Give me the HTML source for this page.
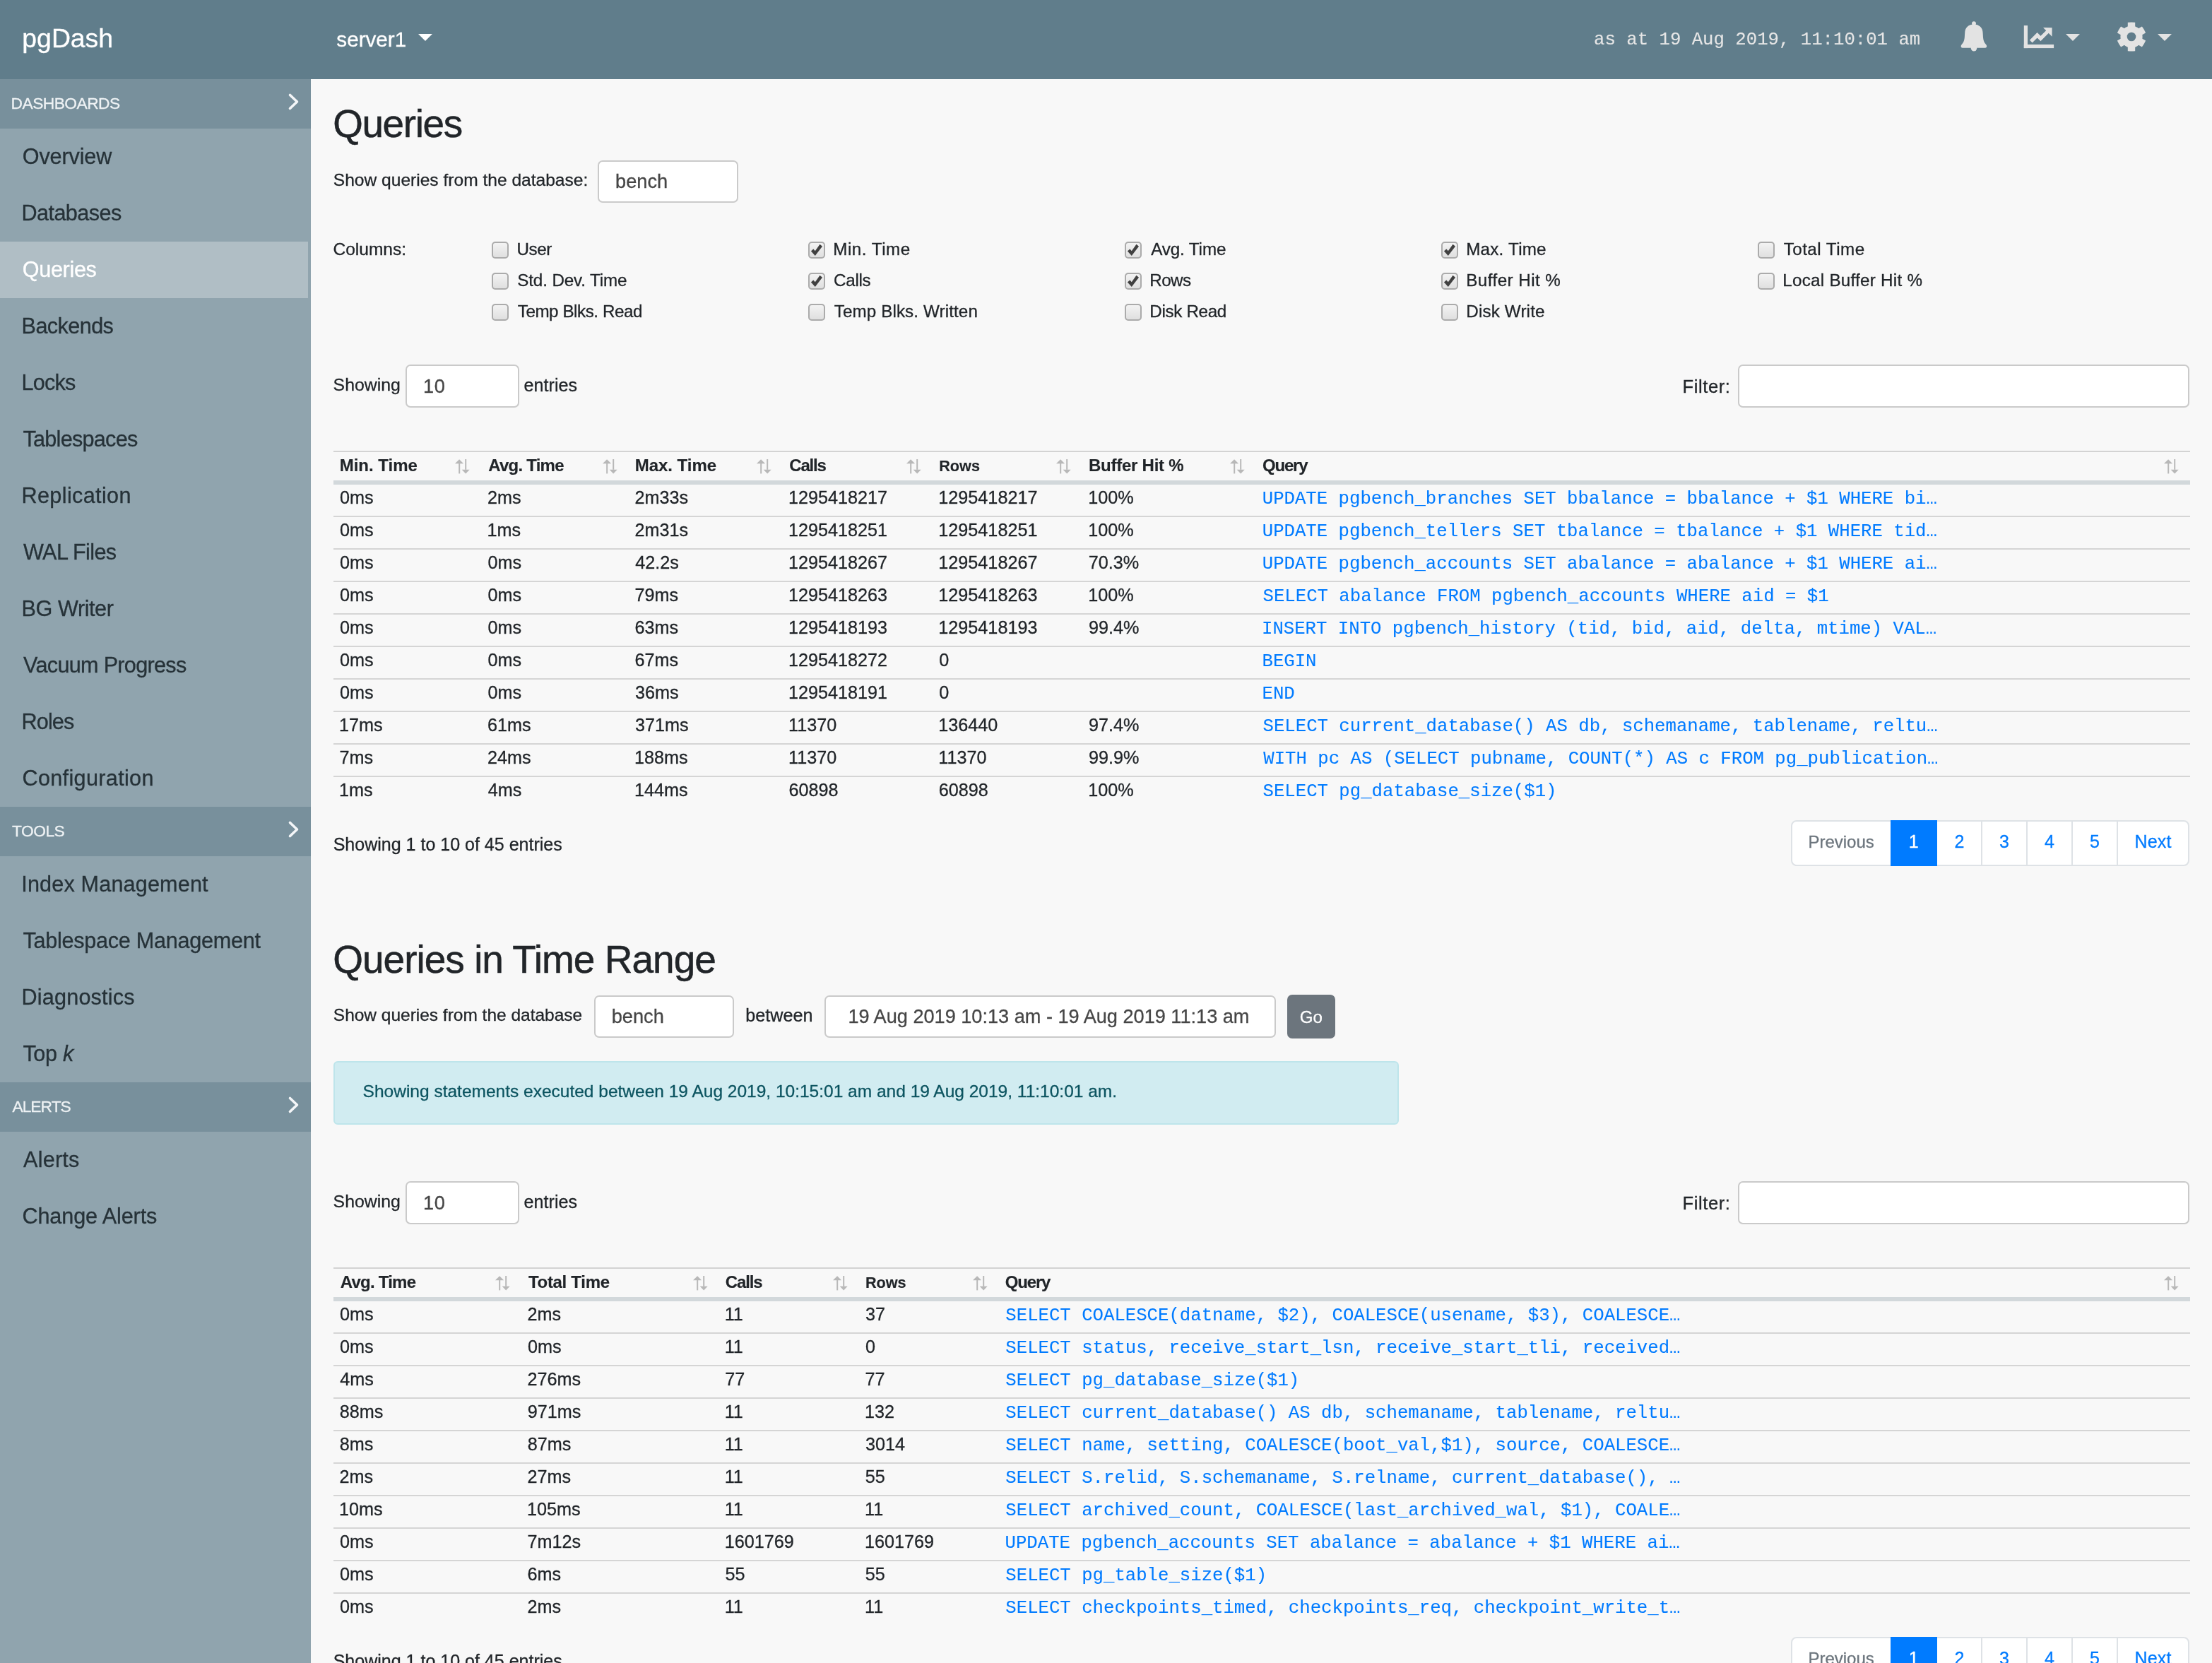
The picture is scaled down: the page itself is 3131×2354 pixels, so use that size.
<!DOCTYPE html>
<html><head><meta charset="utf-8"><title>pgDash - Queries</title>
<style>
html,body{margin:0;padding:0;}
body{width:3131px;height:2354px;overflow:hidden;position:relative;background:#f8f8f8;font-family:"Liberation Sans",sans-serif;}
body>div,body>svg{position:absolute;}
.t{position:absolute;white-space:pre;line-height:1;-webkit-text-stroke-width:0.3px;}
#tx{position:absolute;left:0;top:0;width:3131px;height:2354px;will-change:transform;}
</style></head><body>
<div style="left:0px;top:0px;width:3131px;height:112px;background:#607d8b"></div>
<svg style="left:592px;top:48px" width="20" height="10"><polygon points="0,0 20,0 10,10" fill="#ffffff"/></svg>
<svg style="left:2770px;top:25px" width="50" height="52" viewBox="0 0 50 52">
<circle cx="24" cy="8.2" r="2.9" fill="#e3e3e3"/>
<path d="M11.2 21.5 C11.2 14 16.5 9.4 23.9 9.4 C31.3 9.4 36.6 14 36.6 21.5 L37 28 C37.5 34 39.8 36.5 41.5 38.5 C42.6 39.8 42.5 42.7 40 42.7 L7.8 42.7 C5.3 42.7 5.2 39.8 6.3 38.5 C8 36.5 10.3 34 10.8 28 Z" fill="#e3e3e3"/>
<circle cx="24" cy="43.2" r="4.2" fill="#e3e3e3"/>
</svg>
<svg style="left:2860px;top:30px" width="52" height="42" viewBox="0 0 52 42">
<rect x="4.8" y="6.1" width="5.2" height="32" fill="#e3e3e3"/>
<rect x="4.8" y="33" width="42.3" height="5.1" fill="#e3e3e3"/>
<polyline points="14.8,28.6 23.6,19.8 28.4,24.6 39.5,13.5" fill="none" stroke="#e3e3e3" stroke-width="5.2" stroke-linejoin="miter"/>
<polygon points="32,9.1 44.6,9.2 44.5,21.8" fill="#e3e3e3"/>
</svg>
<svg style="left:2924px;top:48px" width="20" height="10"><polygon points="0,0 20,0 10,10" fill="#e3e3e3"/></svg>
<svg style="left:2996px;top:31px" width="42" height="42" viewBox="-21 -21 42 42">
<path d="M-5.2 -10 L-5.2 -20.2 Q0 -20.9 5.2 -20.2 L5.2 -10 Z" transform="rotate(0)" fill="#e3e3e3"/><path d="M-5.2 -10 L-5.2 -20.2 Q0 -20.9 5.2 -20.2 L5.2 -10 Z" transform="rotate(60)" fill="#e3e3e3"/><path d="M-5.2 -10 L-5.2 -20.2 Q0 -20.9 5.2 -20.2 L5.2 -10 Z" transform="rotate(120)" fill="#e3e3e3"/><path d="M-5.2 -10 L-5.2 -20.2 Q0 -20.9 5.2 -20.2 L5.2 -10 Z" transform="rotate(180)" fill="#e3e3e3"/><path d="M-5.2 -10 L-5.2 -20.2 Q0 -20.9 5.2 -20.2 L5.2 -10 Z" transform="rotate(240)" fill="#e3e3e3"/><path d="M-5.2 -10 L-5.2 -20.2 Q0 -20.9 5.2 -20.2 L5.2 -10 Z" transform="rotate(300)" fill="#e3e3e3"/><circle r="15.6" fill="#e3e3e3"/><circle r="6.3" fill="#607d8b"/></svg>
<svg style="left:3054px;top:48px" width="20" height="10"><polygon points="0,0 20,0 10,10" fill="#e3e3e3"/></svg>
<div style="left:0px;top:112px;width:440px;height:2242px;background:#90a4ae"></div>
<div style="left:0px;top:112px;width:440px;height:70px;background:#78909c"></div>
<svg style="left:405px;top:130px" width="22" height="28"><polyline points="5.5,4.5 15.5,14 5.5,23.5" fill="none" stroke="#f4f6f8" stroke-width="3.6" stroke-linecap="round" stroke-linejoin="round"/></svg>
<div style="left:0px;top:342px;width:436px;height:80px;background:#b0bec5"></div>
<div style="left:0px;top:1142px;width:440px;height:70px;background:#78909c"></div>
<svg style="left:405px;top:1160px" width="22" height="28"><polyline points="5.5,4.5 15.5,14 5.5,23.5" fill="none" stroke="#f4f6f8" stroke-width="3.6" stroke-linecap="round" stroke-linejoin="round"/></svg>
<div style="left:0px;top:1532px;width:440px;height:70px;background:#78909c"></div>
<svg style="left:405px;top:1550px" width="22" height="28"><polyline points="5.5,4.5 15.5,14 5.5,23.5" fill="none" stroke="#f4f6f8" stroke-width="3.6" stroke-linecap="round" stroke-linejoin="round"/></svg>
<div style="left:846px;top:227px;width:199px;height:60px;background:#fff;border:2px solid #cacaca;border-radius:7px;box-sizing:border-box"></div>
<svg style="left:696px;top:342px" width="24" height="26"><defs><linearGradient id="g" x1="0" y1="0" x2="0" y2="1"><stop offset="0" stop-color="#f4f4f4"/><stop offset="1" stop-color="#dedede"/></linearGradient></defs><rect x="1" y="2" width="22" height="22" rx="4" fill="#000" opacity="0.06"/><rect x="1" y="1" width="22" height="22" rx="4" fill="url(#g)" stroke="#ababab" stroke-width="2"/></svg>
<svg style="left:1144px;top:342px" width="24" height="26"><defs><linearGradient id="g" x1="0" y1="0" x2="0" y2="1"><stop offset="0" stop-color="#f4f4f4"/><stop offset="1" stop-color="#dedede"/></linearGradient></defs><rect x="1" y="2" width="22" height="22" rx="4" fill="#000" opacity="0.06"/><rect x="1" y="1" width="22" height="22" rx="4" fill="url(#g)" stroke="#ababab" stroke-width="2"/><polygon points="3.9,13.4 7.3,10.5 9.8,13.3 16.5,3.8 20,6.7 9.8,19.9" fill="#404040"/></svg>
<svg style="left:1592px;top:342px" width="24" height="26"><defs><linearGradient id="g" x1="0" y1="0" x2="0" y2="1"><stop offset="0" stop-color="#f4f4f4"/><stop offset="1" stop-color="#dedede"/></linearGradient></defs><rect x="1" y="2" width="22" height="22" rx="4" fill="#000" opacity="0.06"/><rect x="1" y="1" width="22" height="22" rx="4" fill="url(#g)" stroke="#ababab" stroke-width="2"/><polygon points="3.9,13.4 7.3,10.5 9.8,13.3 16.5,3.8 20,6.7 9.8,19.9" fill="#404040"/></svg>
<svg style="left:2040px;top:342px" width="24" height="26"><defs><linearGradient id="g" x1="0" y1="0" x2="0" y2="1"><stop offset="0" stop-color="#f4f4f4"/><stop offset="1" stop-color="#dedede"/></linearGradient></defs><rect x="1" y="2" width="22" height="22" rx="4" fill="#000" opacity="0.06"/><rect x="1" y="1" width="22" height="22" rx="4" fill="url(#g)" stroke="#ababab" stroke-width="2"/><polygon points="3.9,13.4 7.3,10.5 9.8,13.3 16.5,3.8 20,6.7 9.8,19.9" fill="#404040"/></svg>
<svg style="left:2488px;top:342px" width="24" height="26"><defs><linearGradient id="g" x1="0" y1="0" x2="0" y2="1"><stop offset="0" stop-color="#f4f4f4"/><stop offset="1" stop-color="#dedede"/></linearGradient></defs><rect x="1" y="2" width="22" height="22" rx="4" fill="#000" opacity="0.06"/><rect x="1" y="1" width="22" height="22" rx="4" fill="url(#g)" stroke="#ababab" stroke-width="2"/></svg>
<svg style="left:696px;top:386px" width="24" height="26"><defs><linearGradient id="g" x1="0" y1="0" x2="0" y2="1"><stop offset="0" stop-color="#f4f4f4"/><stop offset="1" stop-color="#dedede"/></linearGradient></defs><rect x="1" y="2" width="22" height="22" rx="4" fill="#000" opacity="0.06"/><rect x="1" y="1" width="22" height="22" rx="4" fill="url(#g)" stroke="#ababab" stroke-width="2"/></svg>
<svg style="left:1144px;top:386px" width="24" height="26"><defs><linearGradient id="g" x1="0" y1="0" x2="0" y2="1"><stop offset="0" stop-color="#f4f4f4"/><stop offset="1" stop-color="#dedede"/></linearGradient></defs><rect x="1" y="2" width="22" height="22" rx="4" fill="#000" opacity="0.06"/><rect x="1" y="1" width="22" height="22" rx="4" fill="url(#g)" stroke="#ababab" stroke-width="2"/><polygon points="3.9,13.4 7.3,10.5 9.8,13.3 16.5,3.8 20,6.7 9.8,19.9" fill="#404040"/></svg>
<svg style="left:1592px;top:386px" width="24" height="26"><defs><linearGradient id="g" x1="0" y1="0" x2="0" y2="1"><stop offset="0" stop-color="#f4f4f4"/><stop offset="1" stop-color="#dedede"/></linearGradient></defs><rect x="1" y="2" width="22" height="22" rx="4" fill="#000" opacity="0.06"/><rect x="1" y="1" width="22" height="22" rx="4" fill="url(#g)" stroke="#ababab" stroke-width="2"/><polygon points="3.9,13.4 7.3,10.5 9.8,13.3 16.5,3.8 20,6.7 9.8,19.9" fill="#404040"/></svg>
<svg style="left:2040px;top:386px" width="24" height="26"><defs><linearGradient id="g" x1="0" y1="0" x2="0" y2="1"><stop offset="0" stop-color="#f4f4f4"/><stop offset="1" stop-color="#dedede"/></linearGradient></defs><rect x="1" y="2" width="22" height="22" rx="4" fill="#000" opacity="0.06"/><rect x="1" y="1" width="22" height="22" rx="4" fill="url(#g)" stroke="#ababab" stroke-width="2"/><polygon points="3.9,13.4 7.3,10.5 9.8,13.3 16.5,3.8 20,6.7 9.8,19.9" fill="#404040"/></svg>
<svg style="left:2488px;top:386px" width="24" height="26"><defs><linearGradient id="g" x1="0" y1="0" x2="0" y2="1"><stop offset="0" stop-color="#f4f4f4"/><stop offset="1" stop-color="#dedede"/></linearGradient></defs><rect x="1" y="2" width="22" height="22" rx="4" fill="#000" opacity="0.06"/><rect x="1" y="1" width="22" height="22" rx="4" fill="url(#g)" stroke="#ababab" stroke-width="2"/></svg>
<svg style="left:696px;top:430px" width="24" height="26"><defs><linearGradient id="g" x1="0" y1="0" x2="0" y2="1"><stop offset="0" stop-color="#f4f4f4"/><stop offset="1" stop-color="#dedede"/></linearGradient></defs><rect x="1" y="2" width="22" height="22" rx="4" fill="#000" opacity="0.06"/><rect x="1" y="1" width="22" height="22" rx="4" fill="url(#g)" stroke="#ababab" stroke-width="2"/></svg>
<svg style="left:1144px;top:430px" width="24" height="26"><defs><linearGradient id="g" x1="0" y1="0" x2="0" y2="1"><stop offset="0" stop-color="#f4f4f4"/><stop offset="1" stop-color="#dedede"/></linearGradient></defs><rect x="1" y="2" width="22" height="22" rx="4" fill="#000" opacity="0.06"/><rect x="1" y="1" width="22" height="22" rx="4" fill="url(#g)" stroke="#ababab" stroke-width="2"/></svg>
<svg style="left:1592px;top:430px" width="24" height="26"><defs><linearGradient id="g" x1="0" y1="0" x2="0" y2="1"><stop offset="0" stop-color="#f4f4f4"/><stop offset="1" stop-color="#dedede"/></linearGradient></defs><rect x="1" y="2" width="22" height="22" rx="4" fill="#000" opacity="0.06"/><rect x="1" y="1" width="22" height="22" rx="4" fill="url(#g)" stroke="#ababab" stroke-width="2"/></svg>
<svg style="left:2040px;top:430px" width="24" height="26"><defs><linearGradient id="g" x1="0" y1="0" x2="0" y2="1"><stop offset="0" stop-color="#f4f4f4"/><stop offset="1" stop-color="#dedede"/></linearGradient></defs><rect x="1" y="2" width="22" height="22" rx="4" fill="#000" opacity="0.06"/><rect x="1" y="1" width="22" height="22" rx="4" fill="url(#g)" stroke="#ababab" stroke-width="2"/></svg>
<div style="left:574px;top:516px;width:161px;height:61px;background:#fff;border:2px solid #cacaca;border-radius:7px;box-sizing:border-box"></div>
<div style="left:2460px;top:516px;width:639px;height:61px;background:#fff;border:2px solid #cacaca;border-radius:7px;box-sizing:border-box"></div>
<div style="left:472px;top:638px;width:2628px;height:2px;background:#d3d3d3"></div>
<div style="left:472px;top:680px;width:2628px;height:6px;background:#d2d8db"></div>
<div style="left:472px;top:730px;width:2628px;height:2px;background:#d5d5d5"></div>
<div style="left:472px;top:776px;width:2628px;height:2px;background:#d5d5d5"></div>
<div style="left:472px;top:822px;width:2628px;height:2px;background:#d5d5d5"></div>
<div style="left:472px;top:868px;width:2628px;height:2px;background:#d5d5d5"></div>
<div style="left:472px;top:914px;width:2628px;height:2px;background:#d5d5d5"></div>
<div style="left:472px;top:960px;width:2628px;height:2px;background:#d5d5d5"></div>
<div style="left:472px;top:1006px;width:2628px;height:2px;background:#d5d5d5"></div>
<div style="left:472px;top:1052px;width:2628px;height:2px;background:#d5d5d5"></div>
<div style="left:472px;top:1098px;width:2628px;height:2px;background:#d5d5d5"></div>
<svg style="left:644.4px;top:649.5px" width="21" height="21" viewBox="0 0 21 21"><polygon points="0,6.3 6.1,0.2 12.1,6.3" fill="#b8b8b8"/><rect x="5.2" y="6" width="2" height="14.4" fill="#b8b8b8"/><rect x="14.2" y="0" width="2" height="14.8" fill="#b8b8b8"/><polygon points="9.7,14.8 20.7,14.8 15.2,20.4" fill="#b8b8b8"/></svg>
<svg style="left:852.9px;top:649.5px" width="21" height="21" viewBox="0 0 21 21"><polygon points="0,6.3 6.1,0.2 12.1,6.3" fill="#b8b8b8"/><rect x="5.2" y="6" width="2" height="14.4" fill="#b8b8b8"/><rect x="14.2" y="0" width="2" height="14.8" fill="#b8b8b8"/><polygon points="9.7,14.8 20.7,14.8 15.2,20.4" fill="#b8b8b8"/></svg>
<svg style="left:1070.9px;top:649.5px" width="21" height="21" viewBox="0 0 21 21"><polygon points="0,6.3 6.1,0.2 12.1,6.3" fill="#b8b8b8"/><rect x="5.2" y="6" width="2" height="14.4" fill="#b8b8b8"/><rect x="14.2" y="0" width="2" height="14.8" fill="#b8b8b8"/><polygon points="9.7,14.8 20.7,14.8 15.2,20.4" fill="#b8b8b8"/></svg>
<svg style="left:1283.2px;top:649.5px" width="21" height="21" viewBox="0 0 21 21"><polygon points="0,6.3 6.1,0.2 12.1,6.3" fill="#b8b8b8"/><rect x="5.2" y="6" width="2" height="14.4" fill="#b8b8b8"/><rect x="14.2" y="0" width="2" height="14.8" fill="#b8b8b8"/><polygon points="9.7,14.8 20.7,14.8 15.2,20.4" fill="#b8b8b8"/></svg>
<svg style="left:1495.1px;top:649.5px" width="21" height="21" viewBox="0 0 21 21"><polygon points="0,6.3 6.1,0.2 12.1,6.3" fill="#b8b8b8"/><rect x="5.2" y="6" width="2" height="14.4" fill="#b8b8b8"/><rect x="14.2" y="0" width="2" height="14.8" fill="#b8b8b8"/><polygon points="9.7,14.8 20.7,14.8 15.2,20.4" fill="#b8b8b8"/></svg>
<svg style="left:1740.7px;top:649.5px" width="21" height="21" viewBox="0 0 21 21"><polygon points="0,6.3 6.1,0.2 12.1,6.3" fill="#b8b8b8"/><rect x="5.2" y="6" width="2" height="14.4" fill="#b8b8b8"/><rect x="14.2" y="0" width="2" height="14.8" fill="#b8b8b8"/><polygon points="9.7,14.8 20.7,14.8 15.2,20.4" fill="#b8b8b8"/></svg>
<svg style="left:3062.9px;top:649.5px" width="21" height="21" viewBox="0 0 21 21"><polygon points="0,6.3 6.1,0.2 12.1,6.3" fill="#b8b8b8"/><rect x="5.2" y="6" width="2" height="14.4" fill="#b8b8b8"/><rect x="14.2" y="0" width="2" height="14.8" fill="#b8b8b8"/><polygon points="9.7,14.8 20.7,14.8 15.2,20.4" fill="#b8b8b8"/></svg>
<div style="left:2535px;top:1160.5px;width:564px;height:65px;background:#fff;border:2px solid #dee2e6;border-radius:8px;box-sizing:border-box"></div>
<div style="left:2804px;top:1160.5px;width:2px;height:65px;background:#dee2e6"></div>
<div style="left:2868px;top:1160.5px;width:2px;height:65px;background:#dee2e6"></div>
<div style="left:2932px;top:1160.5px;width:2px;height:65px;background:#dee2e6"></div>
<div style="left:2996px;top:1160.5px;width:2px;height:65px;background:#dee2e6"></div>
<div style="left:2676px;top:1160.5px;width:66px;height:65px;background:#007bff"></div>
<div style="left:841px;top:1409px;width:198px;height:60px;background:#fff;border:2px solid #cacaca;border-radius:7px;box-sizing:border-box"></div>
<div style="left:1166.5px;top:1409px;width:639px;height:60px;background:#fff;border:2px solid #cacaca;border-radius:7px;box-sizing:border-box"></div>
<div style="left:1822px;top:1408px;width:68px;height:62px;background:#6c757d;border-radius:7px"></div>
<div style="left:472px;top:1502px;width:1508px;height:90px;background:#d1ecf1;border:2px solid #bee5eb;border-radius:6px;box-sizing:border-box"></div>
<div style="left:574px;top:1672px;width:161px;height:61px;background:#fff;border:2px solid #cacaca;border-radius:7px;box-sizing:border-box"></div>
<div style="left:2460px;top:1672px;width:639px;height:61px;background:#fff;border:2px solid #cacaca;border-radius:7px;box-sizing:border-box"></div>
<div style="left:472px;top:1794px;width:2628px;height:2px;background:#d3d3d3"></div>
<div style="left:472px;top:1836px;width:2628px;height:6px;background:#d2d8db"></div>
<div style="left:472px;top:1886px;width:2628px;height:2px;background:#d5d5d5"></div>
<div style="left:472px;top:1932px;width:2628px;height:2px;background:#d5d5d5"></div>
<div style="left:472px;top:1978px;width:2628px;height:2px;background:#d5d5d5"></div>
<div style="left:472px;top:2024px;width:2628px;height:2px;background:#d5d5d5"></div>
<div style="left:472px;top:2070px;width:2628px;height:2px;background:#d5d5d5"></div>
<div style="left:472px;top:2116px;width:2628px;height:2px;background:#d5d5d5"></div>
<div style="left:472px;top:2162px;width:2628px;height:2px;background:#d5d5d5"></div>
<div style="left:472px;top:2208px;width:2628px;height:2px;background:#d5d5d5"></div>
<div style="left:472px;top:2254px;width:2628px;height:2px;background:#d5d5d5"></div>
<svg style="left:700.9px;top:1805.5px" width="21" height="21" viewBox="0 0 21 21"><polygon points="0,6.3 6.1,0.2 12.1,6.3" fill="#b8b8b8"/><rect x="5.2" y="6" width="2" height="14.4" fill="#b8b8b8"/><rect x="14.2" y="0" width="2" height="14.8" fill="#b8b8b8"/><polygon points="9.7,14.8 20.7,14.8 15.2,20.4" fill="#b8b8b8"/></svg>
<svg style="left:980.5px;top:1805.5px" width="21" height="21" viewBox="0 0 21 21"><polygon points="0,6.3 6.1,0.2 12.1,6.3" fill="#b8b8b8"/><rect x="5.2" y="6" width="2" height="14.4" fill="#b8b8b8"/><rect x="14.2" y="0" width="2" height="14.8" fill="#b8b8b8"/><polygon points="9.7,14.8 20.7,14.8 15.2,20.4" fill="#b8b8b8"/></svg>
<svg style="left:1178.9px;top:1805.5px" width="21" height="21" viewBox="0 0 21 21"><polygon points="0,6.3 6.1,0.2 12.1,6.3" fill="#b8b8b8"/><rect x="5.2" y="6" width="2" height="14.4" fill="#b8b8b8"/><rect x="14.2" y="0" width="2" height="14.8" fill="#b8b8b8"/><polygon points="9.7,14.8 20.7,14.8 15.2,20.4" fill="#b8b8b8"/></svg>
<svg style="left:1376.5px;top:1805.5px" width="21" height="21" viewBox="0 0 21 21"><polygon points="0,6.3 6.1,0.2 12.1,6.3" fill="#b8b8b8"/><rect x="5.2" y="6" width="2" height="14.4" fill="#b8b8b8"/><rect x="14.2" y="0" width="2" height="14.8" fill="#b8b8b8"/><polygon points="9.7,14.8 20.7,14.8 15.2,20.4" fill="#b8b8b8"/></svg>
<svg style="left:3062.9px;top:1805.5px" width="21" height="21" viewBox="0 0 21 21"><polygon points="0,6.3 6.1,0.2 12.1,6.3" fill="#b8b8b8"/><rect x="5.2" y="6" width="2" height="14.4" fill="#b8b8b8"/><rect x="14.2" y="0" width="2" height="14.8" fill="#b8b8b8"/><polygon points="9.7,14.8 20.7,14.8 15.2,20.4" fill="#b8b8b8"/></svg>
<div style="left:2535px;top:2316.5px;width:564px;height:65px;background:#fff;border:2px solid #dee2e6;border-radius:8px;box-sizing:border-box"></div>
<div style="left:2804px;top:2316.5px;width:2px;height:65px;background:#dee2e6"></div>
<div style="left:2868px;top:2316.5px;width:2px;height:65px;background:#dee2e6"></div>
<div style="left:2932px;top:2316.5px;width:2px;height:65px;background:#dee2e6"></div>
<div style="left:2996px;top:2316.5px;width:2px;height:65px;background:#dee2e6"></div>
<div style="left:2676px;top:2316.5px;width:66px;height:65px;background:#007bff"></div>
<div id="tx">
<div class="t" style="left:31.36px;top:36.13px;font-size:37.4px;color:#ffffff;letter-spacing:-0.033px">pgDash</div>
<div class="t" style="left:476.31px;top:41.35px;font-size:29.7px;color:#ffffff;letter-spacing:-0.012px">server1</div>
<div class="t" style="left:2256.06px;top:44.33px;font-size:25.68px;color:#e6e6e6;font-family:'Liberation Mono',monospace;-webkit-text-stroke-width:0.1px">as at 19 Aug 2019, 11:10:01 am</div>
<div class="t" style="left:15.58px;top:134.70px;font-size:22.8px;color:#eef2f4;letter-spacing:-0.552px">DASHBOARDS</div>
<div class="t" style="left:31.78px;top:206.09px;font-size:30.6px;color:#263238;letter-spacing:-0.134px">Overview</div>
<div class="t" style="left:30.55px;top:286.09px;font-size:30.6px;color:#263238;letter-spacing:-0.578px">Databases</div>
<div class="t" style="left:31.78px;top:366.09px;font-size:30.6px;color:#ffffff;letter-spacing:-0.334px">Queries</div>
<div class="t" style="left:30.55px;top:446.09px;font-size:30.6px;color:#263238;letter-spacing:-0.574px">Backends</div>
<div class="t" style="left:30.55px;top:526.09px;font-size:30.6px;color:#263238;letter-spacing:-0.793px">Locks</div>
<div class="t" style="left:32.39px;top:606.09px;font-size:30.6px;color:#263238;letter-spacing:-0.718px">Tablespaces</div>
<div class="t" style="left:30.55px;top:686.09px;font-size:30.6px;color:#263238;letter-spacing:0.358px">Replication</div>
<div class="t" style="left:33.00px;top:766.09px;font-size:30.6px;color:#263238;letter-spacing:-0.633px">WAL Files</div>
<div class="t" style="left:30.55px;top:846.09px;font-size:30.6px;color:#263238;letter-spacing:-0.424px">BG Writer</div>
<div class="t" style="left:33.00px;top:926.09px;font-size:30.6px;color:#263238;letter-spacing:-0.687px">Vacuum Progress</div>
<div class="t" style="left:30.55px;top:1006.09px;font-size:30.6px;color:#263238;letter-spacing:-0.867px">Roles</div>
<div class="t" style="left:31.47px;top:1086.09px;font-size:30.6px;color:#263238;letter-spacing:0.336px">Configuration</div>
<div class="t" style="left:16.94px;top:1164.70px;font-size:22.8px;color:#eef2f4;letter-spacing:-0.493px">TOOLS</div>
<div class="t" style="left:30.25px;top:1236.09px;font-size:30.6px;color:#263238;letter-spacing:0.161px">Index Management</div>
<div class="t" style="left:32.39px;top:1316.09px;font-size:30.6px;color:#263238;letter-spacing:-0.264px">Tablespace Management</div>
<div class="t" style="left:30.55px;top:1396.09px;font-size:30.6px;color:#263238;letter-spacing:0.180px">Diagnostics</div>
<div class="t" style="left:32.39px;top:1476.09px;font-size:30.6px;color:#263238;letter-spacing:-0.309px">Top <i>k</i></div>
<div class="t" style="left:17.40px;top:1554.70px;font-size:22.8px;color:#eef2f4;letter-spacing:-0.968px">ALERTS</div>
<div class="t" style="left:33.00px;top:1626.09px;font-size:30.6px;color:#263238;letter-spacing:0.240px">Alerts</div>
<div class="t" style="left:31.47px;top:1706.09px;font-size:30.6px;color:#263238;letter-spacing:-0.105px">Change Alerts</div>
<div class="t" style="left:471.21px;top:147.60px;font-size:54.8px;color:#212529;letter-spacing:-1.341px;-webkit-text-stroke-width:0.5px">Queries</div>
<div class="t" style="left:471.82px;top:243.40px;font-size:24.57px;color:#212529">Show queries from the database:</div>
<div class="t" style="left:871.07px;top:242.67px;font-size:27.2px;color:#464646;letter-spacing:0.012px">bench</div>
<div class="t" style="left:471.57px;top:340.96px;font-size:24.5px;color:#212529;letter-spacing:-0.015px">Columns:</div>
<div class="t" style="left:731.51px;top:341.31px;font-size:24.2px;color:#212529;letter-spacing:-0.428px">User</div>
<div class="t" style="left:1179.26px;top:341.31px;font-size:24.2px;color:#212529;letter-spacing:0.511px">Min. Time</div>
<div class="t" style="left:1629.20px;top:341.31px;font-size:24.2px;color:#212529;letter-spacing:-0.114px">Avg. Time</div>
<div class="t" style="left:2075.26px;top:341.31px;font-size:24.2px;color:#212529;letter-spacing:0.221px">Max. Time</div>
<div class="t" style="left:2524.72px;top:341.31px;font-size:24.2px;color:#212529;letter-spacing:0.460px">Total Time</div>
<div class="t" style="left:732.23px;top:385.31px;font-size:24.2px;color:#212529;letter-spacing:-0.115px">Std. Dev. Time</div>
<div class="t" style="left:1179.99px;top:385.31px;font-size:24.2px;color:#212529;letter-spacing:-0.263px">Calls</div>
<div class="t" style="left:1627.26px;top:385.31px;font-size:24.2px;color:#212529;letter-spacing:-0.550px">Rows</div>
<div class="t" style="left:2075.26px;top:385.31px;font-size:24.2px;color:#212529;letter-spacing:0.452px">Buffer Hit %</div>
<div class="t" style="left:2523.26px;top:385.31px;font-size:24.2px;color:#212529;letter-spacing:0.270px">Local Buffer Hit %</div>
<div class="t" style="left:732.72px;top:429.31px;font-size:24.2px;color:#212529;letter-spacing:-0.434px">Temp Blks. Read</div>
<div class="t" style="left:1180.72px;top:429.31px;font-size:24.2px;color:#212529;letter-spacing:0.116px">Temp Blks. Written</div>
<div class="t" style="left:1627.26px;top:429.31px;font-size:24.2px;color:#212529;letter-spacing:-0.317px">Disk Read</div>
<div class="t" style="left:2075.26px;top:429.31px;font-size:24.2px;color:#212529;letter-spacing:0.168px">Disk Write</div>
<div class="t" style="left:471.61px;top:533.00px;font-size:24.8px;color:#212529">Showing</div>
<div class="t" style="left:599.00px;top:532.87px;font-size:27.2px;color:#464646;letter-spacing:0.533px">10</div>
<div class="t" style="left:741.50px;top:532.75px;font-size:25.1px;color:#212529;letter-spacing:0.037px">entries</div>
<div class="t" style="left:2381.56px;top:534.91px;font-size:25.5px;color:#212529;letter-spacing:0.588px">Filter:</div>
<div class="t" style="left:480.76px;top:647.38px;font-size:24.0px;color:#212529;font-weight:bold;-webkit-text-stroke-width:0.15px;letter-spacing:-0.021px">Min. Time</div>
<div class="t" style="left:691.22px;top:647.38px;font-size:24.0px;color:#212529;font-weight:bold;-webkit-text-stroke-width:0.15px;letter-spacing:-0.757px">Avg. Time</div>
<div class="t" style="left:898.76px;top:647.38px;font-size:24.0px;color:#212529;font-weight:bold;-webkit-text-stroke-width:0.15px;letter-spacing:-0.030px">Max. Time</div>
<div class="t" style="left:1117.24px;top:647.38px;font-size:24.0px;color:#212529;font-weight:bold;-webkit-text-stroke-width:0.15px;letter-spacing:-1.159px">Calls</div>
<div class="t" style="left:1329.20px;top:649.36px;font-size:21.6660715506697px;color:#212529;font-weight:bold;-webkit-text-stroke-width:0.15px">Rows</div>
<div class="t" style="left:1540.96px;top:647.38px;font-size:24.0px;color:#212529;font-weight:bold;-webkit-text-stroke-width:0.15px;letter-spacing:-0.248px">Buffer Hit %</div>
<div class="t" style="left:1787.04px;top:647.38px;font-size:24.0px;color:#212529;font-weight:bold;-webkit-text-stroke-width:0.15px;letter-spacing:-1.199px">Query</div>
<div class="t" style="left:481.04px;top:692.46px;font-size:25.2px;color:#212529">0ms</div>
<div class="t" style="left:690.04px;top:692.46px;font-size:25.2px;color:#212529">2ms</div>
<div class="t" style="left:898.54px;top:692.46px;font-size:25.2px;color:#212529">2m33s</div>
<div class="t" style="left:1116.04px;top:692.46px;font-size:25.2px;color:#212529">1295418217</div>
<div class="t" style="left:1328.34px;top:692.46px;font-size:25.2px;color:#212529">1295418217</div>
<div class="t" style="left:1540.24px;top:692.46px;font-size:25.2px;color:#212529">100%</div>
<div class="t" style="left:1786.76px;top:694.13px;font-size:25.68px;color:#007bff;font-family:'Liberation Mono',monospace;-webkit-text-stroke-width:0.1px">UPDATE pgbench_branches SET bbalance = bbalance + $1 WHERE bi…</div>
<div class="t" style="left:481.04px;top:738.46px;font-size:25.2px;color:#212529">0ms</div>
<div class="t" style="left:689.54px;top:738.46px;font-size:25.2px;color:#212529">1ms</div>
<div class="t" style="left:898.54px;top:738.46px;font-size:25.2px;color:#212529">2m31s</div>
<div class="t" style="left:1116.04px;top:738.46px;font-size:25.2px;color:#212529">1295418251</div>
<div class="t" style="left:1328.34px;top:738.46px;font-size:25.2px;color:#212529">1295418251</div>
<div class="t" style="left:1540.24px;top:738.46px;font-size:25.2px;color:#212529">100%</div>
<div class="t" style="left:1786.76px;top:740.13px;font-size:25.68px;color:#007bff;font-family:'Liberation Mono',monospace;-webkit-text-stroke-width:0.1px">UPDATE pgbench_tellers SET tbalance = tbalance + $1 WHERE tid…</div>
<div class="t" style="left:481.04px;top:784.46px;font-size:25.2px;color:#212529">0ms</div>
<div class="t" style="left:690.54px;top:784.46px;font-size:25.2px;color:#212529">0ms</div>
<div class="t" style="left:899.30px;top:784.46px;font-size:25.2px;color:#212529">42.2s</div>
<div class="t" style="left:1116.04px;top:784.46px;font-size:25.2px;color:#212529">1295418267</div>
<div class="t" style="left:1328.34px;top:784.46px;font-size:25.2px;color:#212529">1295418267</div>
<div class="t" style="left:1540.74px;top:784.46px;font-size:25.2px;color:#212529">70.3%</div>
<div class="t" style="left:1786.76px;top:786.13px;font-size:25.68px;color:#007bff;font-family:'Liberation Mono',monospace;-webkit-text-stroke-width:0.1px">UPDATE pgbench_accounts SET abalance = abalance + $1 WHERE ai…</div>
<div class="t" style="left:481.04px;top:830.46px;font-size:25.2px;color:#212529">0ms</div>
<div class="t" style="left:690.54px;top:830.46px;font-size:25.2px;color:#212529">0ms</div>
<div class="t" style="left:898.54px;top:830.46px;font-size:25.2px;color:#212529">79ms</div>
<div class="t" style="left:1116.04px;top:830.46px;font-size:25.2px;color:#212529">1295418263</div>
<div class="t" style="left:1328.34px;top:830.46px;font-size:25.2px;color:#212529">1295418263</div>
<div class="t" style="left:1540.24px;top:830.46px;font-size:25.2px;color:#212529">100%</div>
<div class="t" style="left:1787.53px;top:832.13px;font-size:25.68px;color:#007bff;font-family:'Liberation Mono',monospace;-webkit-text-stroke-width:0.1px">SELECT abalance FROM pgbench_accounts WHERE aid = $1</div>
<div class="t" style="left:481.04px;top:876.46px;font-size:25.2px;color:#212529">0ms</div>
<div class="t" style="left:690.54px;top:876.46px;font-size:25.2px;color:#212529">0ms</div>
<div class="t" style="left:898.54px;top:876.46px;font-size:25.2px;color:#212529">63ms</div>
<div class="t" style="left:1116.04px;top:876.46px;font-size:25.2px;color:#212529">1295418193</div>
<div class="t" style="left:1328.34px;top:876.46px;font-size:25.2px;color:#212529">1295418193</div>
<div class="t" style="left:1540.99px;top:876.46px;font-size:25.2px;color:#212529">99.4%</div>
<div class="t" style="left:1785.99px;top:878.13px;font-size:25.68px;color:#007bff;font-family:'Liberation Mono',monospace;-webkit-text-stroke-width:0.1px">INSERT INTO pgbench_history (tid, bid, aid, delta, mtime) VAL…</div>
<div class="t" style="left:481.04px;top:922.46px;font-size:25.2px;color:#212529">0ms</div>
<div class="t" style="left:690.54px;top:922.46px;font-size:25.2px;color:#212529">0ms</div>
<div class="t" style="left:898.54px;top:922.46px;font-size:25.2px;color:#212529">67ms</div>
<div class="t" style="left:1116.04px;top:922.46px;font-size:25.2px;color:#212529">1295418272</div>
<div class="t" style="left:1329.34px;top:922.46px;font-size:25.2px;color:#212529">0</div>
<div class="t" style="left:1786.50px;top:924.13px;font-size:25.68px;color:#007bff;font-family:'Liberation Mono',monospace;-webkit-text-stroke-width:0.1px">BEGIN</div>
<div class="t" style="left:481.04px;top:968.46px;font-size:25.2px;color:#212529">0ms</div>
<div class="t" style="left:690.54px;top:968.46px;font-size:25.2px;color:#212529">0ms</div>
<div class="t" style="left:899.04px;top:968.46px;font-size:25.2px;color:#212529">36ms</div>
<div class="t" style="left:1116.04px;top:968.46px;font-size:25.2px;color:#212529">1295418191</div>
<div class="t" style="left:1329.34px;top:968.46px;font-size:25.2px;color:#212529">0</div>
<div class="t" style="left:1786.50px;top:970.13px;font-size:25.68px;color:#007bff;font-family:'Liberation Mono',monospace;-webkit-text-stroke-width:0.1px">END</div>
<div class="t" style="left:480.04px;top:1014.46px;font-size:25.2px;color:#212529">17ms</div>
<div class="t" style="left:690.04px;top:1014.46px;font-size:25.2px;color:#212529">61ms</div>
<div class="t" style="left:899.04px;top:1014.46px;font-size:25.2px;color:#212529">371ms</div>
<div class="t" style="left:1116.04px;top:1014.46px;font-size:25.2px;color:#212529">11370</div>
<div class="t" style="left:1328.34px;top:1014.46px;font-size:25.2px;color:#212529">136440</div>
<div class="t" style="left:1540.99px;top:1014.46px;font-size:25.2px;color:#212529">97.4%</div>
<div class="t" style="left:1787.53px;top:1016.13px;font-size:25.68px;color:#007bff;font-family:'Liberation Mono',monospace;-webkit-text-stroke-width:0.1px">SELECT current_database() AS db, schemaname, tablename, reltu…</div>
<div class="t" style="left:480.54px;top:1060.46px;font-size:25.2px;color:#212529">7ms</div>
<div class="t" style="left:690.04px;top:1060.46px;font-size:25.2px;color:#212529">24ms</div>
<div class="t" style="left:898.04px;top:1060.46px;font-size:25.2px;color:#212529">188ms</div>
<div class="t" style="left:1116.04px;top:1060.46px;font-size:25.2px;color:#212529">11370</div>
<div class="t" style="left:1328.34px;top:1060.46px;font-size:25.2px;color:#212529">11370</div>
<div class="t" style="left:1540.99px;top:1060.46px;font-size:25.2px;color:#212529">99.9%</div>
<div class="t" style="left:1788.30px;top:1062.13px;font-size:25.68px;color:#007bff;font-family:'Liberation Mono',monospace;-webkit-text-stroke-width:0.1px">WITH pc AS (SELECT pubname, COUNT(*) AS c FROM pg_publication…</div>
<div class="t" style="left:480.04px;top:1106.46px;font-size:25.2px;color:#212529">1ms</div>
<div class="t" style="left:690.80px;top:1106.46px;font-size:25.2px;color:#212529">4ms</div>
<div class="t" style="left:898.04px;top:1106.46px;font-size:25.2px;color:#212529">144ms</div>
<div class="t" style="left:1116.54px;top:1106.46px;font-size:25.2px;color:#212529">60898</div>
<div class="t" style="left:1328.84px;top:1106.46px;font-size:25.2px;color:#212529">60898</div>
<div class="t" style="left:1540.24px;top:1106.46px;font-size:25.2px;color:#212529">100%</div>
<div class="t" style="left:1787.53px;top:1108.13px;font-size:25.68px;color:#007bff;font-family:'Liberation Mono',monospace;-webkit-text-stroke-width:0.1px">SELECT pg_database_size($1)</div>
<div class="t" style="left:471.70px;top:1182.71px;font-size:25.03px;color:#212529">Showing 1 to 10 of 45 entries</div>
<div class="t" style="left:2559.38px;top:1179.68px;font-size:24.0px;color:#6c757d">Previous</div>
<div class="t" style="left:2701.75px;top:1178.83px;font-size:25px;color:#ffffff">1</div>
<div class="t" style="left:2766.50px;top:1178.83px;font-size:25px;color:#007bff">2</div>
<div class="t" style="left:2830.12px;top:1178.83px;font-size:25px;color:#007bff">3</div>
<div class="t" style="left:2894.12px;top:1178.83px;font-size:25px;color:#007bff">4</div>
<div class="t" style="left:2958.00px;top:1178.83px;font-size:25px;color:#007bff">5</div>
<div class="t" style="left:3021.50px;top:1178.83px;font-size:25.0px;color:#007bff;letter-spacing:0.181px">Next</div>
<div class="t" style="left:471.20px;top:1330.53px;font-size:55.0px;color:#212529;letter-spacing:-0.990px;-webkit-text-stroke-width:0.5px">Queries in Time Range</div>
<div class="t" style="left:471.82px;top:1425.27px;font-size:24.48px;color:#212529">Show queries from the database</div>
<div class="t" style="left:865.67px;top:1425.17px;font-size:27.2px;color:#464646;letter-spacing:0.012px">bench</div>
<div class="t" style="left:1055.29px;top:1424.70px;font-size:25.16px;color:#212529">between</div>
<div class="t" style="left:1200.40px;top:1425.23px;font-size:27.13px;color:#464646">19 Aug 2019 10:13 am - 19 Aug 2019 11:13 am</div>
<div class="t" style="left:1839.79px;top:1428.08px;font-size:24.121836309849897px;color:#ffffff">Go</div>
<div class="t" style="left:513.62px;top:1533.25px;font-size:24.51px;color:#0c5460">Showing statements executed between 19 Aug 2019, 10:15:01 am and 19 Aug 2019, 11:10:01 am.</div>
<div class="t" style="left:471.61px;top:1689.00px;font-size:24.8px;color:#212529">Showing</div>
<div class="t" style="left:599.00px;top:1688.87px;font-size:27.2px;color:#464646;letter-spacing:0.533px">10</div>
<div class="t" style="left:741.50px;top:1688.75px;font-size:25.1px;color:#212529;letter-spacing:0.037px">entries</div>
<div class="t" style="left:2381.56px;top:1690.91px;font-size:25.5px;color:#212529;letter-spacing:0.588px">Filter:</div>
<div class="t" style="left:481.72px;top:1803.38px;font-size:24.0px;color:#212529;font-weight:bold;-webkit-text-stroke-width:0.15px;letter-spacing:-0.757px">Avg. Time</div>
<div class="t" style="left:747.96px;top:1803.38px;font-size:24.0px;color:#212529;font-weight:bold;-webkit-text-stroke-width:0.15px;letter-spacing:-0.303px">Total Time</div>
<div class="t" style="left:1026.84px;top:1803.38px;font-size:24.0px;color:#212529;font-weight:bold;-webkit-text-stroke-width:0.15px;letter-spacing:-1.159px">Calls</div>
<div class="t" style="left:1224.90px;top:1805.36px;font-size:21.6660715506697px;color:#212529;font-weight:bold;-webkit-text-stroke-width:0.15px">Rows</div>
<div class="t" style="left:1422.84px;top:1803.38px;font-size:24.0px;color:#212529;font-weight:bold;-webkit-text-stroke-width:0.15px;letter-spacing:-1.199px">Query</div>
<div class="t" style="left:481.04px;top:1848.46px;font-size:25.2px;color:#212529">0ms</div>
<div class="t" style="left:746.54px;top:1848.46px;font-size:25.2px;color:#212529">2ms</div>
<div class="t" style="left:1025.64px;top:1848.46px;font-size:25.2px;color:#212529">11</div>
<div class="t" style="left:1225.04px;top:1848.46px;font-size:25.2px;color:#212529">37</div>
<div class="t" style="left:1423.33px;top:1850.13px;font-size:25.68px;color:#007bff;font-family:'Liberation Mono',monospace;-webkit-text-stroke-width:0.1px">SELECT COALESCE(datname, $2), COALESCE(usename, $3), COALESCE…</div>
<div class="t" style="left:481.04px;top:1894.46px;font-size:25.2px;color:#212529">0ms</div>
<div class="t" style="left:747.04px;top:1894.46px;font-size:25.2px;color:#212529">0ms</div>
<div class="t" style="left:1025.64px;top:1894.46px;font-size:25.2px;color:#212529">11</div>
<div class="t" style="left:1225.04px;top:1894.46px;font-size:25.2px;color:#212529">0</div>
<div class="t" style="left:1423.33px;top:1896.13px;font-size:25.68px;color:#007bff;font-family:'Liberation Mono',monospace;-webkit-text-stroke-width:0.1px">SELECT status, receive_start_lsn, receive_start_tli, received…</div>
<div class="t" style="left:481.30px;top:1940.46px;font-size:25.2px;color:#212529">4ms</div>
<div class="t" style="left:746.54px;top:1940.46px;font-size:25.2px;color:#212529">276ms</div>
<div class="t" style="left:1026.14px;top:1940.46px;font-size:25.2px;color:#212529">77</div>
<div class="t" style="left:1224.54px;top:1940.46px;font-size:25.2px;color:#212529">77</div>
<div class="t" style="left:1423.33px;top:1942.13px;font-size:25.68px;color:#007bff;font-family:'Liberation Mono',monospace;-webkit-text-stroke-width:0.1px">SELECT pg_database_size($1)</div>
<div class="t" style="left:480.79px;top:1986.46px;font-size:25.2px;color:#212529">88ms</div>
<div class="t" style="left:746.79px;top:1986.46px;font-size:25.2px;color:#212529">971ms</div>
<div class="t" style="left:1025.64px;top:1986.46px;font-size:25.2px;color:#212529">11</div>
<div class="t" style="left:1224.04px;top:1986.46px;font-size:25.2px;color:#212529">132</div>
<div class="t" style="left:1423.33px;top:1988.13px;font-size:25.68px;color:#007bff;font-family:'Liberation Mono',monospace;-webkit-text-stroke-width:0.1px">SELECT current_database() AS db, schemaname, tablename, reltu…</div>
<div class="t" style="left:480.79px;top:2032.46px;font-size:25.2px;color:#212529">8ms</div>
<div class="t" style="left:746.79px;top:2032.46px;font-size:25.2px;color:#212529">87ms</div>
<div class="t" style="left:1025.64px;top:2032.46px;font-size:25.2px;color:#212529">11</div>
<div class="t" style="left:1225.04px;top:2032.46px;font-size:25.2px;color:#212529">3014</div>
<div class="t" style="left:1423.33px;top:2034.13px;font-size:25.68px;color:#007bff;font-family:'Liberation Mono',monospace;-webkit-text-stroke-width:0.1px">SELECT name, setting, COALESCE(boot_val,$1), source, COALESCE…</div>
<div class="t" style="left:480.54px;top:2078.46px;font-size:25.2px;color:#212529">2ms</div>
<div class="t" style="left:746.54px;top:2078.46px;font-size:25.2px;color:#212529">27ms</div>
<div class="t" style="left:1025.64px;top:2078.46px;font-size:25.2px;color:#212529">11</div>
<div class="t" style="left:1224.79px;top:2078.46px;font-size:25.2px;color:#212529">55</div>
<div class="t" style="left:1423.33px;top:2080.13px;font-size:25.68px;color:#007bff;font-family:'Liberation Mono',monospace;-webkit-text-stroke-width:0.1px">SELECT S.relid, S.schemaname, S.relname, current_database(), …</div>
<div class="t" style="left:480.04px;top:2124.46px;font-size:25.2px;color:#212529">10ms</div>
<div class="t" style="left:746.04px;top:2124.46px;font-size:25.2px;color:#212529">105ms</div>
<div class="t" style="left:1025.64px;top:2124.46px;font-size:25.2px;color:#212529">11</div>
<div class="t" style="left:1224.04px;top:2124.46px;font-size:25.2px;color:#212529">11</div>
<div class="t" style="left:1423.33px;top:2126.13px;font-size:25.68px;color:#007bff;font-family:'Liberation Mono',monospace;-webkit-text-stroke-width:0.1px">SELECT archived_count, COALESCE(last_archived_wal, $1), COALE…</div>
<div class="t" style="left:481.04px;top:2170.46px;font-size:25.2px;color:#212529">0ms</div>
<div class="t" style="left:746.54px;top:2170.46px;font-size:25.2px;color:#212529">7m12s</div>
<div class="t" style="left:1025.64px;top:2170.46px;font-size:25.2px;color:#212529">1601769</div>
<div class="t" style="left:1224.04px;top:2170.46px;font-size:25.2px;color:#212529">1601769</div>
<div class="t" style="left:1422.56px;top:2172.13px;font-size:25.68px;color:#007bff;font-family:'Liberation Mono',monospace;-webkit-text-stroke-width:0.1px">UPDATE pgbench_accounts SET abalance = abalance + $1 WHERE ai…</div>
<div class="t" style="left:481.04px;top:2216.46px;font-size:25.2px;color:#212529">0ms</div>
<div class="t" style="left:746.54px;top:2216.46px;font-size:25.2px;color:#212529">6ms</div>
<div class="t" style="left:1026.39px;top:2216.46px;font-size:25.2px;color:#212529">55</div>
<div class="t" style="left:1224.79px;top:2216.46px;font-size:25.2px;color:#212529">55</div>
<div class="t" style="left:1423.33px;top:2218.13px;font-size:25.68px;color:#007bff;font-family:'Liberation Mono',monospace;-webkit-text-stroke-width:0.1px">SELECT pg_table_size($1)</div>
<div class="t" style="left:481.04px;top:2262.46px;font-size:25.2px;color:#212529">0ms</div>
<div class="t" style="left:746.54px;top:2262.46px;font-size:25.2px;color:#212529">2ms</div>
<div class="t" style="left:1025.64px;top:2262.46px;font-size:25.2px;color:#212529">11</div>
<div class="t" style="left:1224.04px;top:2262.46px;font-size:25.2px;color:#212529">11</div>
<div class="t" style="left:1423.33px;top:2264.13px;font-size:25.68px;color:#007bff;font-family:'Liberation Mono',monospace;-webkit-text-stroke-width:0.1px">SELECT checkpoints_timed, checkpoints_req, checkpoint_write_t…</div>
<div class="t" style="left:471.70px;top:2338.71px;font-size:25.03px;color:#212529">Showing 1 to 10 of 45 entries</div>
<div class="t" style="left:2559.38px;top:2335.68px;font-size:24.0px;color:#6c757d">Previous</div>
<div class="t" style="left:2701.75px;top:2334.83px;font-size:25px;color:#ffffff">1</div>
<div class="t" style="left:2766.50px;top:2334.83px;font-size:25px;color:#007bff">2</div>
<div class="t" style="left:2830.12px;top:2334.83px;font-size:25px;color:#007bff">3</div>
<div class="t" style="left:2894.12px;top:2334.83px;font-size:25px;color:#007bff">4</div>
<div class="t" style="left:2958.00px;top:2334.83px;font-size:25px;color:#007bff">5</div>
<div class="t" style="left:3021.50px;top:2334.83px;font-size:25.0px;color:#007bff;letter-spacing:0.181px">Next</div>
</div>
</body></html>
